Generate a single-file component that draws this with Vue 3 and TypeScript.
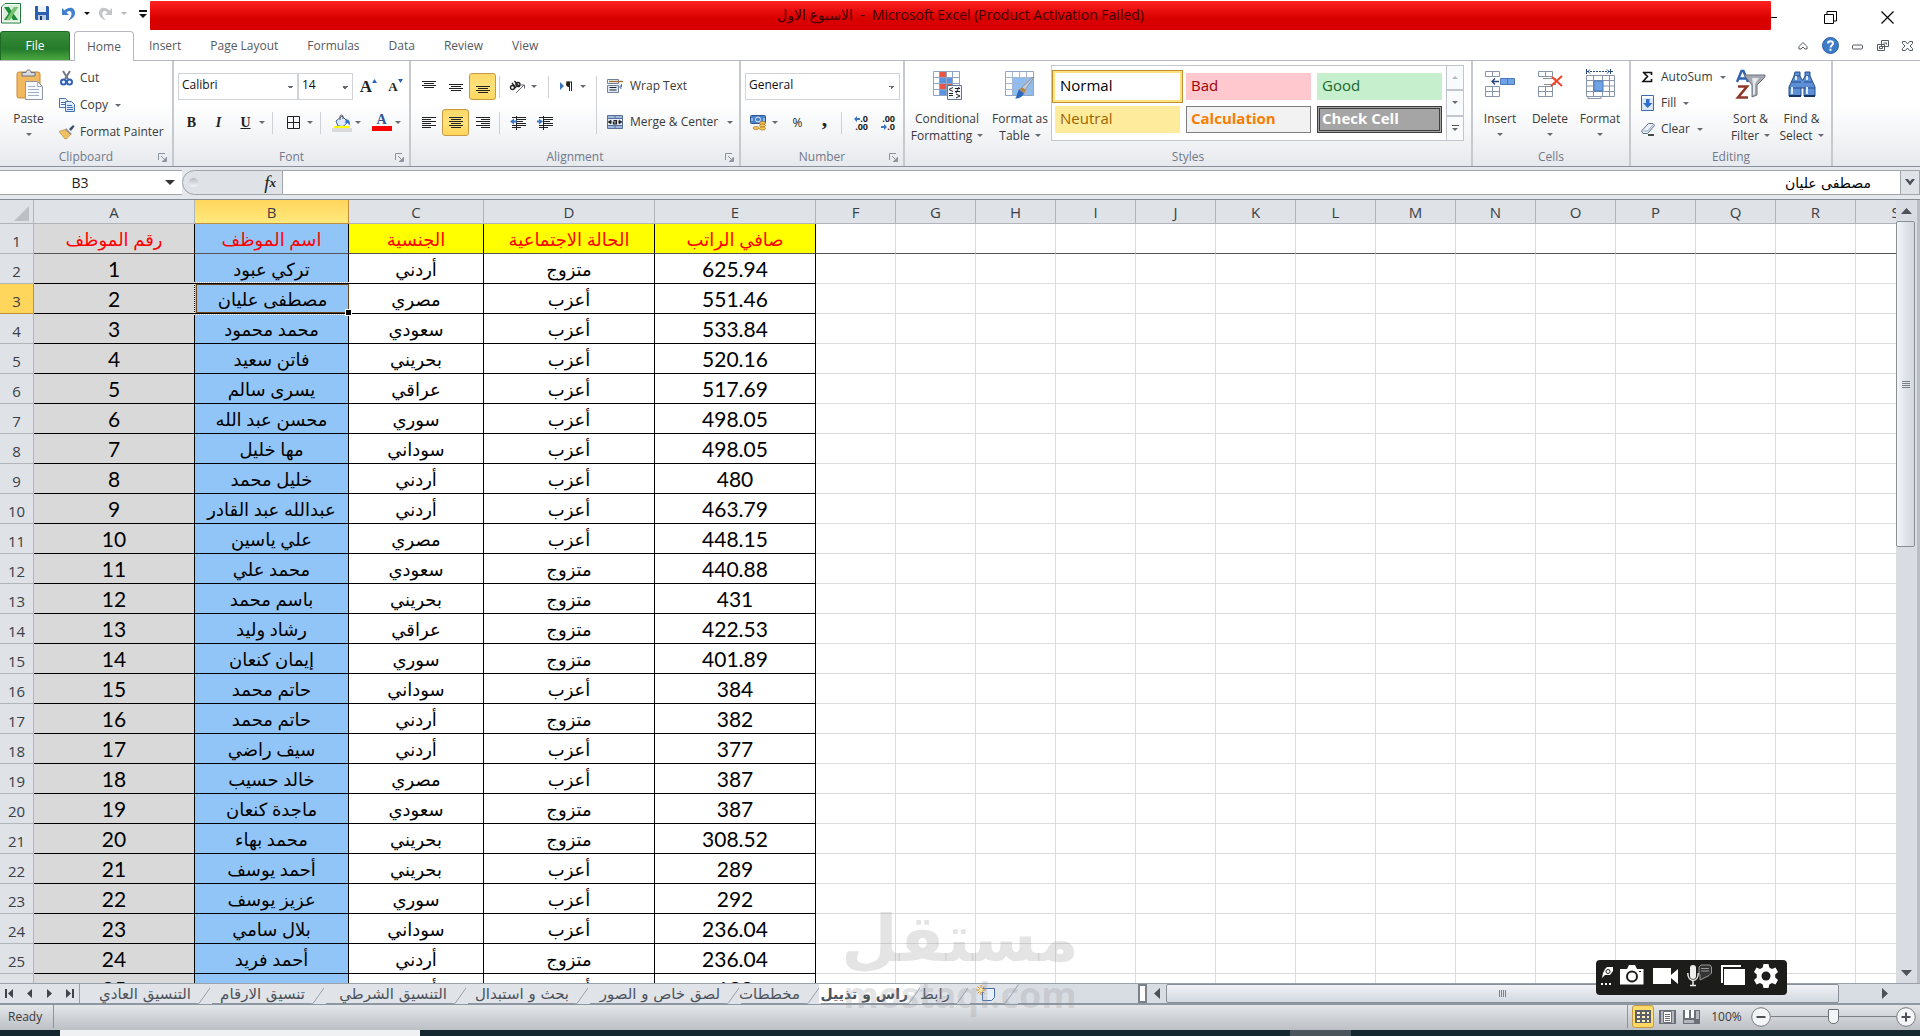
<script setup lang="ts">
interface Column {
  name: string
  width: number
}

interface Employee {
  name: string
  nationality: string
  status: string
  salary: string
}

const ribbonTabs: string[] = ['Insert', 'Page Layout', 'Formulas', 'Data', 'Review', 'View']

const dataColumns: Column[] = [
  { name: 'A', width: 161 },
  { name: 'B', width: 154 },
  { name: 'C', width: 135 },
  { name: 'D', width: 171 },
  { name: 'E', width: 161 },
]
const emptyColumns: Column[] = 'FGHIJKLMNOPQRS'.split('').map((name) => ({ name, width: 80 }))
const columns: Column[] = [...dataColumns, ...emptyColumns]
const headWidth = 34
const sheetWidth = columns.reduce((sum, c) => sum + c.width, headWidth)

const titles: string[] = ['رقم الموظف', 'اسم الموظف', 'الجنسية', 'الحالة الاجتماعية', 'صافي الراتب']

const employees: Employee[] = [
  ['تركي عبود', 'أردني', 'متزوج', '625.94'],
  ['مصطفى عليان', 'مصري', 'أعزب', '551.46'],
  ['محمد محمود', 'سعودي', 'أعزب', '533.84'],
  ['فاتن سعيد', 'بحريني', 'أعزب', '520.16'],
  ['يسرى سالم', 'عراقي', 'أعزب', '517.69'],
  ['محسن عبد الله', 'سوري', 'أعزب', '498.05'],
  ['مها خليل', 'سوداني', 'أعزب', '498.05'],
  ['خليل محمد', 'أردني', 'أعزب', '480'],
  ['عبدالله عبد القادر', 'أردني', 'أعزب', '463.79'],
  ['علي ياسين', 'مصري', 'أعزب', '448.15'],
  ['محمد علي', 'سعودي', 'متزوج', '440.88'],
  ['باسم محمد', 'بحريني', 'متزوج', '431'],
  ['رشاد وليد', 'عراقي', 'متزوج', '422.53'],
  ['إيمان كنعان', 'سوري', 'متزوج', '401.89'],
  ['حاتم محمد', 'سوداني', 'أعزب', '384'],
  ['حاتم محمد', 'أردني', 'متزوج', '382'],
  ['سيف راضي', 'أردني', 'أعزب', '377'],
  ['خالد حسيب', 'مصري', 'أعزب', '387'],
  ['ماجدة كنعان', 'سعودي', 'متزوج', '387'],
  ['محمد بهاء', 'بحريني', 'متزوج', '308.52'],
  ['أحمد يوسف', 'بحريني', 'أعزب', '289'],
  ['عزيز يوسف', 'سوري', 'أعزب', '292'],
  ['بلال سامي', 'سوداني', 'أعزب', '236.04'],
  ['أحمد فريد', 'أردني', 'متزوج', '236.04'],
  ['محمد حسن', 'أردني', 'أعزب', '188'],
].map(([name, nationality, status, salary]) => ({ name, nationality, status, salary }))

const cellStyles: { label: string; kind: string }[] = [
  { label: 'Normal', kind: 'normal' },
  { label: 'Bad', kind: 'bad' },
  { label: 'Good', kind: 'good' },
  { label: 'Neutral', kind: 'neutral' },
  { label: 'Calculation', kind: 'calculation' },
  { label: 'Check Cell', kind: 'check' },
]

const sheets: { label: string; width: number; active?: boolean }[] = [
  { label: 'التنسيق العادي', width: 130 },
  { label: 'تنسيق الارقام', width: 114 },
  { label: 'التنسيق الشرطي', width: 142 },
  { label: 'بحث و استبدال', width: 122 },
  { label: 'لصق خاص  و الصور', width: 151 },
  { label: 'مخططات', width: 80 },
  { label: 'راس و تذييل', width: 101, active: true },
  { label: 'رابط', width: 48 },
]
</script>

<template>
  <div class="app">
    <header class="titlebar">
      <div class="quick">
        <svg class="logo" width="20" height="21" viewBox="0 0 20 21">
          <path d="M4 .5h15.500v19.500H.5V4z" fill="#fff" stroke="#1c7a3c" />
          <path d="M5 2h13v16.500H2V5z" fill="#d9efd9" />
          <path d="M3 4h5l2.500 4L13 4h4l-4.500 6.500L17 17h-5l-2.500-4L7 17H3l4.500-6.500z" fill="#1f8a3b" />
          <path d="M13 4h4l-8 13H5z" fill="#7cc36f" />
        </svg>
        <i class="qsep"></i>
        <button class="ib save" aria-label="Save">
          <svg width="14" height="15" viewBox="0 0 14 15">
            <path d="M0 0h13l1 1v13H1l-1-1z" fill="#2b5fae" />
            <path d="M3 0h8v6H3z" fill="#eaf3ff" /><path d="M3 9h8v5H3z" fill="#b9cbe4" />
            <path d="M5 10h2v4H5z" fill="#173a73" />
          </svg>
        </button>
        <button class="ib undo" aria-label="Undo">
          <svg width="13" height="14" viewBox="0 0 13 14">
            <path d="M0 1v7h7L4.500 5.500C7 3 10 4 9.500 7.500 9.300 9.500 8 11.500 6 13.500c4-1.500 7-4 7-7.500C13 .5 7-1 2.500 3.500z" fill="#3f7fd0" />
          </svg>
        </button>
        <i class="caret black"></i>
        <button class="ib redo" aria-label="Redo">
          <svg width="13" height="14" viewBox="0 0 13 14">
            <path d="M13 1v7H6l2.500-2.500C6 3 3 4 3.500 7.500 3.700 9.500 5 11.500 7 13.500 3 12 0 9.500 0 6 0 .5 6-1 10.500 3.500z" fill="#c3c5c8" />
          </svg>
        </button>
        <i class="caret pale"></i>
        <i class="qsep"></i>
        <button class="ib" aria-label="Customize Quick Access Toolbar">
          <svg width="8" height="8" viewBox="0 0 8 8"><path d="M0 0h8v2H0zM0 4h8L4 8z" fill="#111" /></svg>
        </button>
      </div>
      <h1 class="title"><bdi>الاسبوع الاول</bdi>&nbsp; - &nbsp;Microsoft Excel (Product Activation Failed)</h1>
      <div class="wincontrols">
        <button class="ib" aria-label="Minimize"><svg width="8" height="12" viewBox="0 0 8 12"><path d="M0 5.500h6" stroke="#000" /></svg></button>
        <button class="ib" aria-label="Restore">
          <svg width="13" height="13" viewBox="0 0 13 13" fill="none" stroke="#000"><path d="M.5 3.500h9v9h-9zM3 3V.5h9.500V10H10" /></svg>
        </button>
        <button class="ib" aria-label="Close">
          <svg width="13" height="13" viewBox="0 0 13 13" stroke="#000" stroke-width="1.200"><path d="M.5.500l12 12M12.500.500l-12 12" /></svg>
        </button>
      </div>
    </header>

    <nav class="tabs">
      <button class="tab file">File</button>
      <button class="tab home">Home</button>
      <button v-for="t in ribbonTabs" :key="t" class="tab">{{ t }}</button>
      <div class="doccontrols">
        <button class="ib" aria-label="Minimize the Ribbon">
          <svg width="10" height="9" viewBox="0 0 10 9" fill="#fff" stroke="#555b63"><path d="M1 5.500 5 1.500l4 4V8H7L5 6 3 8H1z" /></svg>
        </button>
        <button class="ib" aria-label="Help">
          <svg width="17" height="17" viewBox="0 0 17 17">
            <circle cx="8.500" cy="8.500" r="8" fill="#3f7cc7" stroke="#2c62aa" />
            <path d="M6 6.500C6 3.500 11 3.500 11 6.500 11 8.200 8.500 8.200 8.500 10.500M8.500 11.800v2" fill="none" stroke="#fff" stroke-width="2" />
          </svg>
        </button>
        <button class="ib" aria-label="Minimize window"><svg width="11" height="8" viewBox="0 0 11 8" fill="#fff" stroke="#555b63"><rect x=".5" y="3" width="10" height="4" rx="1" /></svg></button>
        <button class="ib" aria-label="Restore window">
          <svg width="12" height="11" viewBox="0 0 12 11" fill="#fff" stroke="#555b63"><path d="M4.500.500h7v6h-7zM.5 4.500h7v6h-7z" /><path d="M6.500 3h3v1.500M2.500 6.500h3v2h-3z" /></svg>
        </button>
        <button class="ib" aria-label="Close window">
          <svg width="11" height="10" viewBox="0 0 11 10" fill="#fff" stroke="#555b63"><path d="M.5.500h3l2 2.500 2-2.500h3v2L8 5l2.500 2.500v2h-3L5.500 7l-2 2.500h-3v-2L3 5 .5 2.500z" /></svg>
        </button>
      </div>
    </nav>

    <section class="ribbon">
      <div class="group clipboard">
        <div class="body">
          <button class="big paste">
            <svg width="32" height="32" viewBox="0 0 32 32">
              <rect x="4" y="3" width="23" height="26" rx="2" fill="#f2b95f" stroke="#c98b36" />
              <path d="M9 7V3.500h4C13 0 18 0 18 3.500h4V7z" fill="#d9dbe0" stroke="#6d7179" />
              <path d="M12.500 12.500h12l5 5v13h-17z" fill="#fafcff" stroke="#8d97a8" />
              <path d="M24.500 12.500v5h5M15 17.500h7M15 20.500h11M15 23.500h11M15 26.500h11" fill="none" stroke="#9fb0c8" />
            </svg>
            <span>Paste</span><i class="caret"></i>
          </button>
          <div class="stack">
            <button class="cmd">
              <svg width="16" height="16" viewBox="0 0 16 16"><path d="M4 1l5 8M11 1L6 9" stroke="#6f7784" stroke-width="2" /><circle cx="4.500" cy="12" r="2.500" fill="none" stroke="#2f62b4" stroke-width="2" /><circle cx="10.500" cy="12" r="2.500" fill="none" stroke="#2f62b4" stroke-width="2" /></svg>
              Cut
            </button>
            <button class="cmd">
              <svg width="16" height="16" viewBox="0 0 16 16" stroke="#4470b0"><path d="M.5 1.500h6l2 2v7h-8z" fill="#eef5ff" /><path d="M2 5.500h5M2 7.500h5" /><path d="M6.500 4.500h6l3 3v7h-9z" fill="#dceaff" /><path d="M8 8.500h5M8 10.500h6M8 12.500h6" /></svg>
              Copy<i class="caret"></i>
            </button>
            <button class="cmd">
              <svg width="16" height="16" viewBox="0 0 16 16"><path d="M10 5l4-4 1.500 1.500L12 7z" fill="#3c4f73" /><path d="M7 4l6 6-2 1-5-5z" fill="#8c96a8" /><path d="M6 5.500l5.500 5L8 14.500 6 15 0 7.500z" fill="#efc064" stroke="#b5803a" stroke-width=".6" /></svg>
              Format Painter
            </button>
          </div>
        </div>
        <footer>Clipboard<svg class="launch" width="9" height="9" viewBox="0 0 9 9"><path d="M.5 7V.5H7M3 3l3 3M8.500 4v4.500H4" fill="none" stroke="#8b93a0" /><path d="M8 4.500V8H4.500z" fill="#8b93a0" /></svg></footer>
      </div>

      <div class="group font">
        <div class="body rows">
          <div class="row">
            <select class="combo fontname" aria-label="Font"><option>Calibri</option></select>
            <select class="combo fontsize" aria-label="Font size"><option>14</option></select>
            <button class="ib grow" aria-label="Increase font size"><b class="serif">A</b><svg width="5" height="4" viewBox="0 0 5 4"><path d="M2.500 0L5 4H0z" fill="#2d63b5" /></svg></button>
            <button class="ib shrink" aria-label="Decrease font size"><b class="serif">A</b><svg width="5" height="4" viewBox="0 0 5 4"><path d="M0 0h5L2.500 4z" fill="#2d63b5" /></svg></button>
          </div>
          <div class="row second">
            <button class="ib w27 serif"><b>B</b></button>
            <button class="ib w27 serif"><b><em>I</em></b></button>
            <button class="ib w27 serif"><b><u>U</u></b></button>
            <i class="caret"></i><i class="sep"></i>
            <button class="ib w27" aria-label="Borders"><svg width="13" height="13" viewBox="0 0 13 13" fill="none" stroke="#222"><path d="M.5.500h12v12H.5zM6.500.500v12M.5 6.500h12" /></svg></button>
            <i class="caret"></i><i class="sep"></i>
            <button class="ib w27" aria-label="Fill color">
              <svg width="20" height="18" viewBox="0 0 20 18">
                <path d="M4 7l6-5 6 6-5 4.500-5-.5z" fill="#dde9fa" stroke="#3c5f99" /><path d="M8 6V2.500c0-2 3-2 3 0V5" fill="none" stroke="#555" />
                <path d="M14 5c4 1 4.500 4 3.500 6.500C16 9 15 8.500 13 9z" fill="#2f6fca" />
                <path d="M2 12h16v2H2z" fill="#ff0" /><path d="M0 14h20v4H0z" fill="#d9d9d9" />
              </svg>
            </button>
            <i class="caret"></i>
            <button class="ib w27 fontcolor" aria-label="Font color"><b class="serif">A</b></button>
            <i class="caret"></i>
          </div>
        </div>
        <footer>Font<svg class="launch" width="9" height="9" viewBox="0 0 9 9"><path d="M.5 7V.5H7M3 3l3 3M8.500 4v4.500H4" fill="none" stroke="#8b93a0" /><path d="M8 4.500V8H4.500z" fill="#8b93a0" /></svg></footer>
      </div>

      <div class="group alignment">
        <div class="body rows">
          <div class="row">
            <button class="ib w27" aria-label="Top align"><svg width="14" height="14" viewBox="0 0 14 14" stroke="#222"><path d="M0 1.500h14M2 3.500h10M0 5.500h14M2 7.500h10" /></svg></button>
            <button class="ib w27" aria-label="Middle align"><svg width="14" height="14" viewBox="0 0 14 14" stroke="#222"><path d="M0 4.500h14M2 6.500h10M0 8.500h14M2 10.500h10" /></svg></button>
            <button class="ib w27 on" aria-label="Bottom align"><svg width="14" height="14" viewBox="0 0 14 14" stroke="#222"><path d="M0 6.500h14M2 8.500h10M0 10.500h14M2 12.500h10" /></svg></button>
            <i class="sep"></i>
            <button class="ib w27" aria-label="Orientation">
              <svg width="17" height="14" viewBox="0 0 17 14" fill="none" stroke="#222"><circle cx="3.500" cy="7.500" r="2" stroke-width="1.400" /><path d="M3 3l4 5M5.500 1l5 6" stroke-width="1.400" /><circle cx="9" cy="4.500" r="2" stroke-width="1.400" /><path d="M7 13l8-8M12 5h3.500v3.500" stroke="#667" /></svg>
            </button>
            <i class="caret"></i><i class="sep"></i>
            <button class="ib w27" aria-label="Text direction"><svg width="13" height="12" viewBox="0 0 13 12"><path d="M0 1l4 4-4 4z" fill="#3a75c4" /><path d="M6 1h6M9.500 1v9M11.500 1v9" stroke="#222" fill="none" /><path d="M9 .5C5 .5 5 6 9 6z" fill="#222" /></svg></button>
            <i class="caret"></i>
          </div>
          <div class="row second">
            <button class="ib w27" aria-label="Align left"><svg width="14" height="14" viewBox="0 0 14 14" stroke="#222"><path d="M0 1.500h14M0 3.500h9M0 5.500h14M0 7.500h9M0 9.500h14M0 11.500h9" /></svg></button>
            <button class="ib w27 on" aria-label="Center"><svg width="14" height="14" viewBox="0 0 14 14" stroke="#222"><path d="M0 1.500h14M2 3.500h10M0 5.500h14M2 7.500h10M0 9.500h14M2 11.500h10" /></svg></button>
            <button class="ib w27" aria-label="Align right"><svg width="14" height="14" viewBox="0 0 14 14" stroke="#222"><path d="M0 1.500h14M5 3.500h9M0 5.500h14M5 7.500h9M0 9.500h14M5 11.500h9" /></svg></button>
            <i class="sep"></i>
            <button class="ib w27" aria-label="Decrease indent"><svg width="16" height="14" viewBox="0 0 16 14"><path d="M2 1.500h14M7 3.500h9M7 5.500h6M7 7.500h9M2 9.500h14M2 11.500h9M6.500 0v14" stroke="#222" /><path d="M0 5.500L4 2.500v2h3v2H4v2z" fill="#3a75c4" /></svg></button>
            <button class="ib w27" aria-label="Increase indent"><svg width="16" height="14" viewBox="0 0 16 14"><path d="M2 1.500h14M7 3.500h9M7 5.500h6M7 7.500h9M2 9.500h14M2 11.500h9M6.500 0v14" stroke="#222" /><path d="M6 5.500L2 2.500v2H0v2h2v2z" fill="#3a75c4" /></svg></button>
          </div>
        </div>
        <div class="wraps">
          <button class="cmd">
            <svg width="16" height="16" viewBox="0 0 16 16"><path d="M.5 1.500h11v4H.5z" fill="#f4f6fa" stroke="#70809c" /><path d="M2 3.500h14" stroke="#a0713a" stroke-width="1.400" /><path d="M.5 7.500h11v7H.5z" fill="#dfe9f7" stroke="#70809c" /><path d="M2.500 9.500h7M2.500 12h7" stroke="#222" /><path d="M14.500 6v3H13m1.500 2l-2-2 2-2" stroke="#3a75c4" fill="none" /></svg>
            Wrap Text
          </button>
          <button class="cmd">
            <svg width="16" height="16" viewBox="0 0 16 16"><path d="M.5 1.500h15v13H.5z" fill="#e6eefa" stroke="#5a6f96" /><path d="M1 2h14v2H1zM1 12h14v2H1z" fill="#9db7de" /><path d="M.5 4.500h15M.5 11.500h15M8 1.500v3M8 11.500v3" stroke="#5a6f96" /><path d="M1 8l3-2v4zM15 8l-3-2v4zM4 8h1.500M11 8h1" fill="#222" stroke="#222" stroke-width=".6" /><path d="M6.500 6.500h3v3.300h-3V8h3" fill="none" stroke="#222" stroke-width="1.200" /></svg>
            Merge &amp; Center<i class="caret"></i>
          </button>
        </div>
        <footer>Alignment<svg class="launch" width="9" height="9" viewBox="0 0 9 9"><path d="M.5 7V.5H7M3 3l3 3M8.500 4v4.500H4" fill="none" stroke="#8b93a0" /><path d="M8 4.500V8H4.500z" fill="#8b93a0" /></svg></footer>
      </div>

      <div class="group number">
        <div class="body rows">
          <div class="row">
            <select class="combo numfmt" aria-label="Number format"><option>General</option></select>
          </div>
          <div class="row second">
            <button class="ib w27" aria-label="Accounting format">
              <svg width="17" height="16" viewBox="0 0 17 16"><rect x=".5" y=".5" width="15" height="8" rx="1" fill="#4a82cc" stroke="#2c5593" /><circle cx="8" cy="4.500" r="2.500" fill="none" stroke="#dce9fb" /><path d="M2 3v3M14 3v3" stroke="#dce9fb" /><ellipse cx="12.500" cy="8" rx="3" ry="1.500" fill="#f6c85a" stroke="#a8741c" stroke-width=".7" /><ellipse cx="12.500" cy="10.500" rx="3" ry="1.500" fill="#f6c85a" stroke="#a8741c" stroke-width=".7" /><ellipse cx="12.500" cy="13.500" rx="3" ry="1.500" fill="#f6c85a" stroke="#a8741c" stroke-width=".7" /><ellipse cx="6" cy="13" rx="3" ry="1.500" fill="#f6c85a" stroke="#a8741c" stroke-width=".7" /></svg>
            </button>
            <i class="caret"></i>
            <button class="ib w27 percent">%</button>
            <button class="ib w27 comma serif" aria-label="Comma style"><b>,</b></button>
            <i class="sep"></i>
            <button class="ib w27 dec" aria-label="Increase decimal"><span><svg width="6" height="6" viewBox="0 0 6 6"><path d="M0 3l3-3v2h3v2H3v2z" fill="#3a75c4" /></svg>.0</span><span>.00</span></button>
            <button class="ib w27 dec" aria-label="Decrease decimal"><span>.00</span><span><svg width="6" height="6" viewBox="0 0 6 6"><path d="M6 3L3 0v2H0v2h3v2z" fill="#3a75c4" /></svg>.0</span></button>
          </div>
        </div>
        <footer>Number<svg class="launch" width="9" height="9" viewBox="0 0 9 9"><path d="M.5 7V.5H7M3 3l3 3M8.500 4v4.500H4" fill="none" stroke="#8b93a0" /><path d="M8 4.500V8H4.500z" fill="#8b93a0" /></svg></footer>
      </div>

      <div class="group styles">
        <div class="body">
          <button class="big cond">
            <svg width="32" height="32" viewBox="0 0 32 32"><path d="M2.500 2.500h26v24h-26z" fill="#fff" stroke="#8fa3c2" /><path d="M9 3h6v6H9zM9 15h12v6H9z" fill="#ea5545" /><path d="M9 9h12v6H9zM9 21h6v5H9z" fill="#5a93e0" /><path d="M2.500 8.500h26M2.500 14.500h26M2.500 20.500h26M8.500 2.500v24M15.500 2.500v24M21.500 2.500v24" stroke="#8fa3c2" /><path d="M16.500 16.500h14v14h-14z" fill="#f4f8fe" stroke="#64748f" /><path d="M22 18.500l-4 2 4 2M18 24.500h4M18 26.500h4M24 19.500h5M24 22.500h5M28 18l-3 6M25 25l4 2-4 2" fill="none" stroke="#222" /></svg>
            <span>Conditional</span><span>Formatting<i class="caret"></i></span>
          </button>
          <button class="big fmt">
            <svg width="32" height="32" viewBox="0 0 32 32"><path d="M1.500 2.500h28v24h-28z" fill="#fff" stroke="#8fa3c2" /><path d="M9 9h20v17H9z" fill="#8fbdf2" /><path d="M1.500 8.500h28M1.500 14.500h28M1.500 20.500h28M8.500 2.500v24M15.500 2.500v24M22.500 2.500v24" stroke="#a3b6d2" /><path d="M30 8l-9 13-3-2.500L29 8z" fill="#c6ccd6" stroke="#7c8493" stroke-width=".7" /><path d="M18 18.500l4 3-2 3-5-4z" fill="#b98646" /><path d="M15 20.500l5 4c-2 4-5 5-9 5 2-2 2-6 4-9z" fill="#2c69bd" /></svg>
            <span>Format as</span><span>Table<i class="caret"></i></span>
          </button>
          <div class="gallery">
            <div class="swatches">
              <button v-for="s in cellStyles" :key="s.kind" class="swatch" :class="s.kind">{{ s.label }}</button>
            </div>
            <div class="gscroll">
              <button aria-label="Previous styles"><i class="caret up"></i></button>
              <button aria-label="Next styles"><i class="caret"></i></button>
              <button aria-label="More styles"><i class="bar"></i><i class="caret"></i></button>
            </div>
          </div>
        </div>
        <footer>Styles</footer>
      </div>

      <div class="group cells">
        <div class="body">
          <button class="big cell">
            <svg width="32" height="32" viewBox="0 0 32 32" fill="#fff" stroke="#8794aa"><path d="M1.500 2.500h14v5h-14zM8.500 2.500v5" /><path d="M1.500 17.500h14v10h-14zM8.500 17.500v10M1.500 22.500h14" /><path d="M16.500 9.500h14v6h-14z" fill="#6ea3e6" stroke="#4a78b8" /><path d="M23.500 9.500v6" stroke="#4a78b8" /><path d="M15 12.500H8m3-3l-3 3 3 3" fill="none" stroke="#28477c" stroke-width="1.400" /></svg>
            <span>Insert</span><i class="caret"></i>
          </button>
          <button class="big cell">
            <svg width="32" height="32" viewBox="0 0 32 32" fill="#fff" stroke="#8794aa"><path d="M4.500 2.500h14v5h-14zM11.500 2.500v5" /><path d="M4.500 17.500h14v10h-14zM11.500 17.500v10M4.500 22.500h14" /><path d="M9.500 9.500h12v6h-12" fill="none" stroke="#222" stroke-dasharray="1 1" /><path d="M18 8l10 9M28 7L17 17" fill="none" stroke="#f0442a" stroke-width="2" /></svg>
            <span>Delete</span><i class="caret"></i>
          </button>
          <button class="big cell">
            <svg width="32" height="32" viewBox="0 0 32 32" fill="#fff" stroke="#8794aa"><path d="M2.500 6.500h28v21h-28z" /><path d="M2.500 11.500h28M2.500 22.500h28M9.500 6.500v21M18.500 6.500v21M25.500 6.500v21M2.500 17h28" fill="none" /><path d="M10 12h9v10h-9z" fill="#6ea3e6" stroke="#4a78b8" /><path d="M4 27.500h13v2H4z" /><path d="M3 2.500h26" stroke="#28477c" stroke-dasharray="2 1" /><path d="M2.500 0v5M26.500 0v5M6 .5l-2 2 2 2M23 .5l2 2-2 2" stroke="#28477c" fill="none" /></svg>
            <span>Format</span><i class="caret"></i>
          </button>
        </div>
        <footer>Cells</footer>
      </div>

      <div class="group editing">
        <div class="body">
          <div class="stack">
            <button class="cmd"><svg width="16" height="16" viewBox="0 0 16 16"><path d="M3 3.500h8.500V6M3 3l4.500 4.500L3 12.500h8.500V10" fill="none" stroke="#111" stroke-width="1.600" /></svg>AutoSum<i class="caret"></i></button>
            <button class="cmd"><svg width="16" height="16" viewBox="0 0 16 16"><path d="M1.500.500h12v15h-12z" fill="#dbe8fa" stroke="#3c6db4" /><path d="M2 1h11v2H2z" fill="#fff" /><path d="M6 4h3.500v4h3l-4.800 5L3 8h3z" fill="#2f6fca" /></svg>Fill<i class="caret"></i></button>
            <button class="cmd"><svg width="16" height="16" viewBox="0 0 16 16"><path d="M1.500 10l7-7.500h4.500l1.500 2-7 8H3z" fill="#eef3fb" stroke="#5b6b86" /><path d="M3.500 10h4l6-6.500" fill="none" stroke="#8fa3c2" /><path d="M8 14h6" stroke="#111" stroke-width="1.500" /></svg>Clear<i class="caret"></i></button>
          </div>
          <button class="big pick">
            <svg width="32" height="32" viewBox="0 0 32 32"><path d="M2 13L6.500 2h2L13 13M4 9.500h7" fill="none" stroke="#2f62b4" stroke-width="2.400" /><path d="M3 17.500h9L3 28.500h10" fill="none" stroke="#8e3a2a" stroke-width="2.600" /><path d="M9 6h21v2l-8 8v10l-5 2V16z" fill="#a5aab2" stroke="#6c727c" /><path d="M17 9h7l-4 6v10l-2 1V15z" fill="#e5e7ea" /></svg>
            <span>Sort &amp;</span><span>Filter<i class="caret"></i></span>
          </button>
          <button class="big pick">
            <svg width="32" height="32" viewBox="0 0 32 32"><path d="M9 3h5v4l2 4h1l2-4V3h5v4l5 11v9H18v-8h-3v8H3v-9L8 7z" fill="#5c8fd6" stroke="#274c86" /><path d="M8 7h6M19 7h5M6 13h9M18 13h8M3 19h12M18 19h11" stroke="#274c86" /><path d="M6 18v7M21 18v7M10 7v4M21 7v4" stroke="#dceafd" stroke-width="2" /><path d="M3 27h12M18 27h11" stroke="#173463" stroke-width="2" /></svg>
            <span>Find &amp;</span><span>Select<i class="caret"></i></span>
          </button>
        </div>
        <footer>Editing</footer>
      </div>
    </section>

    <section class="formulabar">
      <div class="namebox"><input aria-label="Name box" value="B3" /><i class="caret large"></i></div>
      <div class="fx"><i class="knob"></i><button class="ib serif" aria-label="Insert function"><em>f</em><sub><b><em>x</em></b></sub></button></div>
      <input class="formula" dir="rtl" aria-label="Formula" value="مصطفى عليان" />
      <button class="expand" aria-label="Expand formula bar"><svg width="10" height="7" viewBox="0 0 10 7"><path d="M0 0h3l2 2.500L7 0h3L5 6.500z" fill="#4a5058" /></svg></button>
    </section>

    <main class="work">
      <div class="sheet">
        <table :style="{ width: sheetWidth + 'px' }">
          <colgroup>
            <col :style="{ width: headWidth + 'px' }" />
            <col v-for="c in columns" :key="c.name" :style="{ width: c.width + 'px' }" />
          </colgroup>
          <thead>
            <tr>
              <th class="corner"><svg width="15" height="15" viewBox="0 0 15 15"><path d="M15 0v15H0z" fill="#bcc0c5" /></svg></th>
              <th v-for="c in columns" :key="c.name" scope="col" :class="{ sel: c.name === 'B' }">{{ c.name }}</th>
            </tr>
          </thead>
          <tbody>
            <tr class="frozen">
              <th scope="row">1</th>
              <td v-for="(t, i) in titles" :key="t" dir="rtl" class="data" :class="['head', { grey: i === 0, blue: i === 1 }]">{{ t }}</td>
              <td v-for="c in emptyColumns" :key="c.name"></td>
            </tr>
            <tr v-for="(e, i) in employees" :key="i">
              <th scope="row" :class="{ sel: i === 1 }">{{ i + 2 }}</th>
              <td class="data grey">{{ i + 1 }}</td>
              <td class="data blue" dir="rtl" :class="{ active: i === 1 }">{{ e.name }}</td>
              <td class="data" dir="rtl">{{ e.nationality }}</td>
              <td class="data" dir="rtl">{{ e.status }}</td>
              <td class="data">{{ e.salary }}</td>
              <td v-for="c in emptyColumns" :key="c.name"></td>
            </tr>
          </tbody>
        </table>
      </div>
      <div class="vscroll">
        <button class="arrow" aria-label="Scroll up"><svg width="11" height="6" viewBox="0 0 11 6"><path d="M5.500 0L11 6H0z" fill="#4b5158" /></svg></button>
        <div class="vtrack"><div class="vthumb"><i></i><i></i><i></i><i></i></div></div>
        <button class="arrow down" aria-label="Scroll down"><svg width="11" height="6" viewBox="0 0 11 6"><path d="M0 0h11L5.500 6z" fill="#4b5158" /></svg></button>
      </div>
      <div class="watermark"><span class="wlogo" dir="rtl">مستقل</span><span class="wname">mostaql.com</span></div>
    </main>

    <section class="sheetbar">
      <div class="sheetnav">
        <button class="ib" aria-label="First sheet"><svg width="9" height="9" viewBox="0 0 9 9" fill="#3f454d"><path d="M0 0h2v9H0zM8 0v9L3 4.500z" /></svg></button>
        <button class="ib" aria-label="Previous sheet"><svg width="9" height="9" viewBox="0 0 9 9" fill="#3f454d"><path d="M7 0v9L2 4.500z" /></svg></button>
        <button class="ib" aria-label="Next sheet"><svg width="9" height="9" viewBox="0 0 9 9" fill="#3f454d"><path d="M2 0v9l5-4.500z" /></svg></button>
        <button class="ib" aria-label="Last sheet"><svg width="9" height="9" viewBox="0 0 9 9" fill="#3f454d"><path d="M7 0h2v9H7zM1 0v9l5-4.500z" /></svg></button>
      </div>
      <button v-for="s in sheets" :key="s.label" class="sheettab" :class="{ current: s.active }" :style="{ width: s.width + 'px' }">
        <bdi>{{ s.label }}</bdi>
        <svg class="slash" width="17" height="20" viewBox="0 0 17 20"><path d="M0 20L16 0v20z" fill="#e0e4e9" /><path d="M0 19.500h3L16.500.5" fill="none" stroke="#9aa1aa" /></svg>
      </button>
      <button class="sheettab newsheet" aria-label="Insert worksheet">
        <svg width="20" height="18" viewBox="0 0 20 18"><path d="M6.500 3.500h12v9l-3 3h-9z" fill="#e9f1fd" stroke="#4a6db0" /><path d="M5 0v10M0 5h10M1.500 1.500l7 7M8.500 1.500l-7 7" stroke="#d88a1c" /><circle cx="5" cy="5" r="2" fill="#ffe9a0" /></svg>
        <svg class="slash" width="17" height="20" viewBox="0 0 17 20"><path d="M0 20L16 0v20z" fill="#d8dde3" /><path d="M0 19.500h3L16.500.5" fill="none" stroke="#9aa1aa" /></svg>
      </button>
      <div class="hscroll">
        <i class="split"></i>
        <button class="ib" aria-label="Scroll left"><svg width="6" height="11" viewBox="0 0 6 11"><path d="M6 0v11L0 5.500z" fill="#4b5158" /></svg></button>
        <div class="htrack"><div class="hthumb"><i></i><i></i><i></i><i></i></div></div>
        <button class="ib right" aria-label="Scroll right"><svg width="6" height="11" viewBox="0 0 6 11"><path d="M0 0v11l6-5.500z" fill="#4b5158" /></svg></button>
      </div>
      <div class="recorder">
        <span class="pin"><svg width="12" height="11" viewBox="0 0 12 11"><path d="M6 0h6v4L9 8H4l-3 3 1-5 2-4z" fill="#fff" /><circle cx="7" cy="4.500" r="2" fill="none" stroke="#222" /></svg><svg width="10" height="3" viewBox="0 0 10 3"><path d="M0 0h2v2H0zM4 0h2v2H4zM8 0h2v2H8z" fill="#fff" /></svg></span>
        <svg width="24" height="24" viewBox="0 0 24 24"><path d="M0 5h7l2-4h6l2 4h6.500v15.500H0z" fill="#fff" /><circle cx="12" cy="12.500" r="5" fill="none" stroke="#1c1c1b" stroke-width="2" /><path d="M19 7h2v1h-2z" fill="#1c1c1b" /></svg>
        <svg width="25" height="24" viewBox="0 0 25 24"><path d="M0 4h18v16H0zM18 11l7-6v15l-7-6z" fill="#fff" /></svg>
        <svg width="25" height="24" viewBox="0 0 25 24"><rect x="3" y="1" width="6" height="14" rx="3" fill="#eee" /><path d="M.8 9c0 10 10.500 10 10.500 0M6 17v4M3 21.500h6" fill="none" stroke="#eee" stroke-width="1.500" /><path d="M12 3l2-2h9l1.500 2v6L22 11.500 13 16v-5l-1-2z" fill="#333" stroke="#999" /><path d="M14 4.500h8M14 7h8" stroke="#999" /></svg>
        <svg width="24" height="24" viewBox="0 0 24 24"><path d="M0 1h20v2H2v16H0z" fill="#fff" /><path d="M3 5h21v16H3z" fill="#fff" /></svg>
        <svg width="24" height="24" viewBox="0 0 24 24"><path d="M9.500 0h5l.8 3.500 2.700 1.500 3.500-1.500L24 8l-2.800 2.500v3L24 16l-2.500 4.500L18 19l-2.700 1.500-.8 3.500h-5l-.8-3.500L6 19l-3.500 1.500L0 16l2.800-2.500v-3L0 8l2.500-4.500L6 5l2.700-1.500z" fill="#fff" /><circle cx="12" cy="12" r="4.500" fill="#1c1c1b" /></svg>
      </div>
    </section>

    <footer class="statusbar">
      <span class="ready">Ready</span>
      <div class="views">
        <button class="view on" aria-label="Normal view"><svg width="16" height="13" viewBox="0 0 16 13"><path d="M0 0h16v13H0z" fill="#5d6066" /><path d="M2 2h3v2H2zM7 2h3v2H7zM12 2h2v2h-2zM2 6h3v2H2zM7 6h3v2H7zM12 6h2v2h-2zM2 10h3v2H2zM7 10h3v2H7zM12 10h2v2h-2z" fill="#fff3c0" /></svg></button>
        <button class="view" aria-label="Page layout view"><svg width="17" height="14" viewBox="0 0 17 14"><path d="M0 0h17v14H0z" fill="#6b7078" /><path d="M2 1h13v12H2z" fill="#b4b8be" /><path d="M4.500 1.500h8v11h-8z" fill="#fff" stroke="#6b7078" /><path d="M6 4.500h5M6 6.500h5M6 8.500h5M6 10.500h5" stroke="#6b7078" /></svg></button>
        <button class="view" aria-label="Page break preview"><svg width="17" height="14" viewBox="0 0 17 14"><path d="M0 0h17v14H0z" fill="#6b7078" /><path d="M2 0h4v8H2zM8 0h3v8H8z" fill="#fff" /><path d="M13 1h3v8h-3zM1 10h10v3H1z" fill="#b4b8be" /></svg></button>
      </div>
      <span class="pct">100%</span>
      <label class="zoom">
        <svg width="20" height="20" viewBox="0 0 20 20"><circle cx="10" cy="10" r="9.300" fill="#f4f5f7" stroke="#75797f" /><path d="M5.500 10h9" stroke="#4d5157" stroke-width="2" /></svg>
        <input type="range" min="0" max="100" value="50" aria-label="Zoom" />
        <svg width="20" height="20" viewBox="0 0 20 20"><circle cx="10" cy="10" r="9.300" fill="#f4f5f7" stroke="#75797f" /><path d="M5.500 10h9M10 5.500v9" stroke="#4d5157" stroke-width="2" /></svg>
      </label>
    </footer>
    <div class="taskbar"><i class="window"></i><i class="task"></i></div>
  </div>
</template>

<style>
html,
body {
  margin: 0;
  overflow: hidden;
}
</style>

<style scoped>
.app {
  display: flex;
  flex-direction: column;
  height: 100vh;
  overflow: hidden;
  background: #fff;
  color: #3a3a3a;
  font: 12px/16px 'Open Sans', 'Noto Sans', 'DejaVu Sans', sans-serif;
}
.app * {
  box-sizing: border-box;
}
button,
input,
select {
  font: inherit;
  color: inherit;
  margin: 0;
  padding: 0;
  border: 0;
  background: none;
}
svg {
  display: block;
  flex: none;
}
.ib {
  display: flex;
  align-items: center;
  justify-content: center;
  flex: none;
}
.serif {
  font-family: 'Liberation Serif', serif;
  color: #222;
}
.caret {
  flex: none;
  width: 0;
  height: 0;
  border: 3px solid transparent;
  border-top-color: #666b73;
  border-bottom: 0;
}
.caret.black {
  border-top-color: #111;
}
.caret.pale {
  border-top-color: #b5b7ba;
}
.caret.up {
  border-top: 0;
  border-bottom: 3px solid #b5b7ba;
}
.caret.large {
  border-width: 5px 5px 0;
  border-top-color: #333;
}

/* Title bar */
.titlebar {
  display: flex;
  height: 31px;
  flex: none;
}
.quick {
  display: flex;
  align-items: center;
  width: 150px;
  padding: 0 4px 4px 1px;
  flex: none;
}
.qsep {
  width: 1px;
  height: 18px;
  margin: 0 10px 0 4px;
  background: #9a9da1;
}
.undo {
  margin: 0 9px 0 13px;
}
.redo {
  margin: 0 9px;
}
.pale + .qsep {
  margin: 0 5px 0 7px;
}
.title {
  flex: 1;
  height: 29px;
  margin: 1px 0 0;
  border-radius: 1px;
  background: linear-gradient(#ff2222, #d90000 60%, #d90000);
  color: #3b0000;
  font: 14px/28px 'Open Sans', 'DejaVu Sans', sans-serif;
  text-align: center;
}
.wincontrols {
  display: flex;
  align-items: center;
  justify-content: space-between;
  width: 149px;
  padding: 4px 26px 0 0;
  flex: none;
}

/* Ribbon tabs */
.tabs {
  display: flex;
  height: 30px;
  flex: none;
  border-bottom: 1px solid #b5b8be;
}
.tab {
  margin-right: 1px;
  padding: 0 14px;
  color: #555a61;
}
.file {
  width: 70px;
  margin-right: 4px;
  border: 1px solid #1e6b25;
  border-bottom: 0;
  border-radius: 3px 3px 0 0;
  background: linear-gradient(#3a8f3c, #257a2b 60%, #4ba840);
  color: #fff;
}
.home {
  height: 30px;
  margin-right: 1px;
  padding: 0 12px;
  border: 1px solid #b5b8be;
  border-bottom: 0;
  border-radius: 4px 4px 0 0;
  background: #fff;
}
.doccontrols {
  display: flex;
  align-items: center;
  justify-content: space-between;
  width: 115px;
  margin: 0 7px 0 auto;
}

/* Ribbon */
.ribbon {
  display: flex;
  height: 106px;
  flex: none;
  border-bottom: 1px solid #8b919a;
  background: linear-gradient(#fff, #fff 40%, #f4f5f7 70%, #e6e9ed);
}
.group {
  position: relative;
  display: grid;
  grid-template: 85px 20px / 1fr;
  flex: none;
  border-right: 2px solid #c6cacf;
}
.group footer {
  position: relative;
  grid-column: 1 / -1;
  color: #72798a;
  line-height: 22px;
  text-align: center;
}
.launch {
  position: absolute;
  right: 5px;
  bottom: 4px;
}
.body {
  display: flex;
}
.rows {
  display: block;
  padding-top: 12px;
}
.row {
  display: flex;
  align-items: center;
  height: 27px;
}
.second {
  margin-top: 9px;
}
.w27 {
  width: 27px;
  height: 27px;
}
.sep {
  flex: none;
  width: 1px;
  height: 22px;
  background: #cdd1d6;
}
.on {
  border: 1px solid #c69a45;
  border-radius: 3px;
  background: linear-gradient(#fdd868, #ffe27a 50%, #ffd65c);
}
.big {
  display: flex;
  flex-direction: column;
  align-items: center;
  padding-top: 8px;
  line-height: 17px;
}
.big svg {
  margin-bottom: 9px;
}
.big span {
  display: flex;
  align-items: center;
}
.big span .caret {
  margin-left: 5px;
}
.big > .caret {
  margin-top: 6px;
}
.cmd {
  display: flex;
  align-items: center;
  gap: 5px;
  white-space: nowrap;
}
.cmd .caret {
  margin-left: 2px;
}
.stack {
  display: flex;
  flex-direction: column;
  justify-content: space-between;
  align-items: flex-start;
}
.combo {
  appearance: none;
  height: 27px;
  padding: 0 3px 3px;
  border: 1px solid #d0d3d8;
  border-radius: 0;
  background:
    linear-gradient(45deg, transparent 50%, #666b73 50%) calc(100% - 7px) 12px / 3px 3px no-repeat,
    linear-gradient(-45deg, transparent 50%, #666b73 50%) calc(100% - 4px) 12px / 3px 3px no-repeat,
    #fff;
  color: #111;
}

.clipboard {
  width: 174px;
}
.paste {
  width: 57px;
}
.clipboard .stack {
  padding: 9px 0 6px 2px;
}
.font {
  width: 237px;
}
.font .rows {
  padding-left: 4px;
}
.fontname {
  width: 120px;
}
.fontsize {
  width: 55px;
}
.grow,
.shrink {
  align-items: flex-start;
  width: 27px;
  padding-left: 4px;
}
.grow {
  font-size: 17px;
}
.shrink {
  font-size: 13px;
}
.font .second .serif {
  font-size: 14px;
}
.font .second .caret {
  margin-right: 7px;
}
.font .second .sep + .ib {
  margin-left: 7px;
}
.fontcolor b {
  width: 20px;
  height: 17px;
  border-bottom: 5px solid #f00;
  color: #2f5597;
  font-size: 14px;
  line-height: 12px;
}
.alignment {
  grid-template-columns: 185px 1fr;
  width: 330px;
}
.alignment .rows {
  padding-left: 4px;
}
.alignment .sep {
  margin: 0 4px 0 3px;
}
.alignment .row .caret {
  margin-right: 8px;
}
.wraps {
  display: flex;
  flex-direction: column;
  gap: 20px;
  height: 58px;
  margin-top: 15px;
  padding: 2px 0 0 10px;
  border-left: 1px solid #cdd1d6;
}
.wraps .cmd {
  gap: 7px;
}
.number {
  width: 164px;
}
.number .rows {
  padding-left: 4px;
}
.numfmt {
  width: 155px;
}
.number .caret {
  margin-right: 6px;
}
.percent {
  color: #222;
}
.comma {
  padding-bottom: 8px;
  font-size: 22px;
}
.number .sep {
  margin: 0 4px 0 3px;
}
.dec {
  flex-direction: column;
  align-items: flex-end;
  padding-right: 5px;
  color: #222;
  font-size: 9px;
  font-weight: 700;
  line-height: 8px;
}
.dec span {
  display: flex;
  align-items: center;
}
.styles {
  width: 568px;
}
.cond {
  width: 84px;
}
.fmt {
  width: 62px;
}
.gallery {
  display: flex;
  width: 413px;
  height: 76px;
  margin-top: 4px;
}
.swatches {
  display: grid;
  grid-template-columns: repeat(3, 125px);
  grid-auto-rows: 27px;
  gap: 6px;
  width: 396px;
  padding: 7px 3px;
  border: 1px solid #c3c7cd;
  border-width: 1px 0 1px 1px;
  background: #fff;
}
.swatch {
  padding: 0 0 2px 5px;
  font: 15px/25px 'Open Sans', sans-serif;
  text-align: left;
}
.normal {
  outline: 2px solid #ffe27a;
  box-shadow: 0 0 0 3px #bf8f35;
  color: #000;
}
.bad {
  background: #ffc7ce;
  color: #9c0006;
}
.good {
  background: #c6efce;
  color: #20662c;
}
.neutral {
  background: #ffeb9c;
  color: #9c6500;
}
.calculation {
  padding-left: 4px;
  border: 1px solid #7f7f7f;
  background: #f2f2f2;
  color: #fa7d00;
  font-weight: 700;
  line-height: 23px;
}
.check {
  padding-left: 2px;
  border: 3px double #3f3f3f;
  background: #a5a5a5;
  color: #fff;
  font-weight: 700;
  line-height: 19px;
}
.gscroll {
  display: grid;
  grid-template-rows: repeat(3, 1fr);
  width: 18px;
}
.gscroll button {
  display: flex;
  flex-direction: column;
  align-items: center;
  justify-content: center;
  gap: 2px;
  border: 1px solid #c3c7cd;
  background: #f9fafb;
}
.bar {
  width: 7px;
  height: 1px;
  background: #555;
}
.cells {
  width: 158px;
}
.cells .body {
  padding-left: 2px;
}
.cell {
  width: 50px;
}
.editing {
  width: 202px;
}
.editing .stack {
  width: 94px;
  padding: 8px 0 9px 9px;
}
.pick {
  width: 51px;
}

/* Formula bar */
.formulabar {
  display: flex;
  height: 33px;
  flex: none;
  padding: 3px 0 4px;
  border-bottom: 1px solid #868c94;
  background: #e4e8ec;
  color: #222;
}
.namebox {
  display: flex;
  align-items: center;
  width: 182px;
  padding-right: 7px;
  border: 1px solid #a0a5ac;
  border-width: 1px 0;
  background: #fff;
}
.namebox input {
  width: 160px;
  font-size: 14px;
  text-align: center;
}
.namebox .caret {
  margin-left: auto;
}
.fx {
  display: flex;
  align-items: center;
  justify-content: space-between;
  width: 101px;
  padding: 0 6px;
  border: 1px solid #a0a5ac;
  border-radius: 13px 0 0 13px;
  background: #dfe3e8;
}
.fx .ib {
  font-size: 19px;
}
.fx sub {
  font-size: 13px;
}
.knob {
  width: 9px;
  height: 9px;
  border-radius: 50%;
  background: linear-gradient(#b8bcc2, #f4f5f7);
}
.formula {
  flex: 1;
  min-width: 0;
  padding: 0 29px;
  border: 1px solid #a0a5ac;
  border-width: 1px 0;
  background: #fff;
  color: #000;
  font: 14px/24px 'DejaVu Sans', sans-serif;
}
.expand {
  display: flex;
  align-items: center;
  justify-content: center;
  width: 20px;
  border: 1px solid #a0a5ac;
  background: #dfe3e8;
}

/* Worksheet */
.work {
  position: relative;
  display: flex;
  flex: 1;
  min-height: 0;
}
.sheet {
  flex: 1;
  min-width: 0;
  overflow: hidden;
}
table {
  table-layout: fixed;
  border-collapse: separate;
  border-spacing: 0;
}
th,
td {
  overflow: hidden;
  height: 30px;
  padding: 0;
  border: solid #dadcdd;
  border-width: 0 1px 1px 0;
  text-align: center;
  white-space: nowrap;
}
th {
  border-color: #b1b5ba;
  background: #dfe2e7;
  color: #3a3f46;
  font-size: 15px;
  font-weight: 400;
  line-height: 20px;
}
thead th {
  height: 24px;
}
tbody th {
  padding-top: 5px;
}
.corner svg {
  margin: 3px 0 0 14px;
}
thead .sel {
  border-color: #c08e3d;
  background: linear-gradient(#ffd65c, #ffe97d);
}
tbody .sel {
  border-color: #c08e3d;
  background: #ffd65c;
}
.data {
  border-color: #000;
  color: #000;
  font: 21px/24px Lato, 'DejaVu Sans', sans-serif;
}
.grey {
  background: #d9d9d9;
}
.blue {
  background: #92c5f7;
}
.data[dir='rtl'] {
  font-size: 18px;
}
.head {
  color: #f00;
}
.head:not(.grey):not(.blue) {
  background: #ff0;
}
.frozen td {
  border-bottom-color: #555;
}
.active {
  position: relative;
  overflow: visible;
}
.active::before {
  content: '';
  position: absolute;
  inset: 0;
  border: 1px solid #6b4420;
  outline: 1px dotted #fff;
  outline-offset: 1px;
}
.active::after {
  content: '';
  position: absolute;
  right: -3px;
  bottom: -3px;
  width: 5px;
  height: 5px;
  border: 1px solid #fff;
  background: #000;
}
.vscroll {
  display: flex;
  flex-direction: column;
  width: 24px;
  flex: none;
  border-right: 3px solid #b9bec5;
  background: #d9dde3;
}
.arrow {
  display: flex;
  align-items: center;
  justify-content: center;
  height: 21px;
  flex: none;
}
.vtrack {
  flex: 1;
}
.vthumb {
  display: flex;
  flex-direction: column;
  align-items: center;
  justify-content: center;
  gap: 1px;
  width: 19px;
  height: 44%;
  border: 1px solid #8a9099;
  border-radius: 2px;
  background: linear-gradient(90deg, #f3f5f8, #e0e4ea 50%, #d3d8df);
}
.vthumb i {
  width: 8px;
  height: 1px;
  background: #7a8088;
}
.watermark {
  position: absolute;
  left: 845px;
  bottom: -32px;
  z-index: 2;
  display: flex;
  flex-direction: column;
  align-items: center;
  width: 230px;
  color: rgba(150, 150, 155, 0.26);
  pointer-events: none;
}
.wlogo {
  font: 700 65px/72px 'DejaVu Sans', sans-serif;
}
.wname {
  font: 700 36px/40px 'Open Sans', sans-serif;
}

/* Sheet tabs */
.sheetbar {
  position: relative;
  display: flex;
  height: 22px;
  flex: none;
  border-top: 1px solid #9aa1aa;
  border-bottom: 2px solid #8d96a1;
  background: #d8dde3;
}
.sheetnav {
  display: flex;
  align-items: center;
  justify-content: space-around;
  width: 80px;
  border-right: 1px solid #9aa1aa;
  background: #e0e4e9;
}
.sheettab {
  position: relative;
  flex: none;
  padding-right: 19px;
  background: #e0e4e9;
  color: #4c525a;
  font: 15px/18px 'DejaVu Sans', sans-serif;
  text-align: right;
  white-space: nowrap;
}
.slash {
  position: absolute;
  top: 0;
  right: -3px;
}
.current {
  padding-right: 12px;
  background: #fff;
  font-size: 14px;
  font-weight: 700;
}
.newsheet {
  width: 48px;
}
.newsheet svg:first-child {
  margin-left: 8px;
}
.hscroll {
  display: flex;
  flex: 1;
  min-width: 0;
  margin-left: 122px;
}
.split {
  width: 9px;
  margin-right: 7px;
  border: 2px solid #7b8189;
  background: #fff;
  flex: none;
}
.htrack {
  flex: 1;
  margin-left: 6px;
}
.hthumb {
  display: flex;
  align-items: center;
  justify-content: center;
  gap: 1px;
  width: 95%;
  height: 19px;
  border: 1px solid #8a9099;
  border-radius: 2px;
  background: linear-gradient(#f0f2f6, #dfe3e9 60%, #d3d8df);
}
.hthumb i {
  width: 1px;
  height: 7px;
  background: #7a8088;
}
.right {
  margin: 0 32px 0 8px;
}
.recorder {
  position: absolute;
  right: 133px;
  bottom: 8px;
  z-index: 3;
  display: flex;
  align-items: center;
  gap: 9px;
  height: 35px;
  padding: 0 9px 3px 5px;
  border-radius: 4px;
  background: #1c1c1b;
}
.pin {
  display: flex;
  flex-direction: column;
  gap: 5px;
  margin-right: -2px;
}

/* Status bar */
.statusbar {
  display: flex;
  align-items: center;
  height: 25px;
  flex: none;
  padding: 0 4px 2px 0;
  background: linear-gradient(#e4e7ea, #cbced2 60%, #bcbfc3);
}
.ready {
  width: 54px;
  padding-left: 8px;
  border-right: 1px solid #8e9299;
  line-height: 23px;
}
.views {
  display: flex;
  align-items: center;
  gap: 2px;
  margin-left: auto;
  padding-left: 4px;
  border-left: 1px solid #8e9299;
}
.view {
  display: flex;
  align-items: center;
  justify-content: center;
  width: 22px;
  height: 23px;
}
.pct {
  width: 49px;
  text-align: center;
}
.zoom {
  display: flex;
  align-items: center;
}
.zoom input {
  appearance: none;
  width: 125px;
  height: 20px;
  background: linear-gradient(#7b8087, #7b8087) center / 100% 1px no-repeat;
}
.zoom input::-webkit-slider-thumb {
  appearance: none;
  width: 11px;
  height: 15px;
  border: 1px solid #6b7078;
  border-radius: 1px 1px 5px 5px;
  background: #f4f5f7;
}
.taskbar {
  display: flex;
  height: 6px;
  flex: none;
  background: #16282f;
}
.window {
  width: 360px;
  margin-left: 60px;
  background: #f0f1f2;
}
.task {
  width: 61px;
  margin-left: 870px;
  background: #4a555b;
}
</style>
